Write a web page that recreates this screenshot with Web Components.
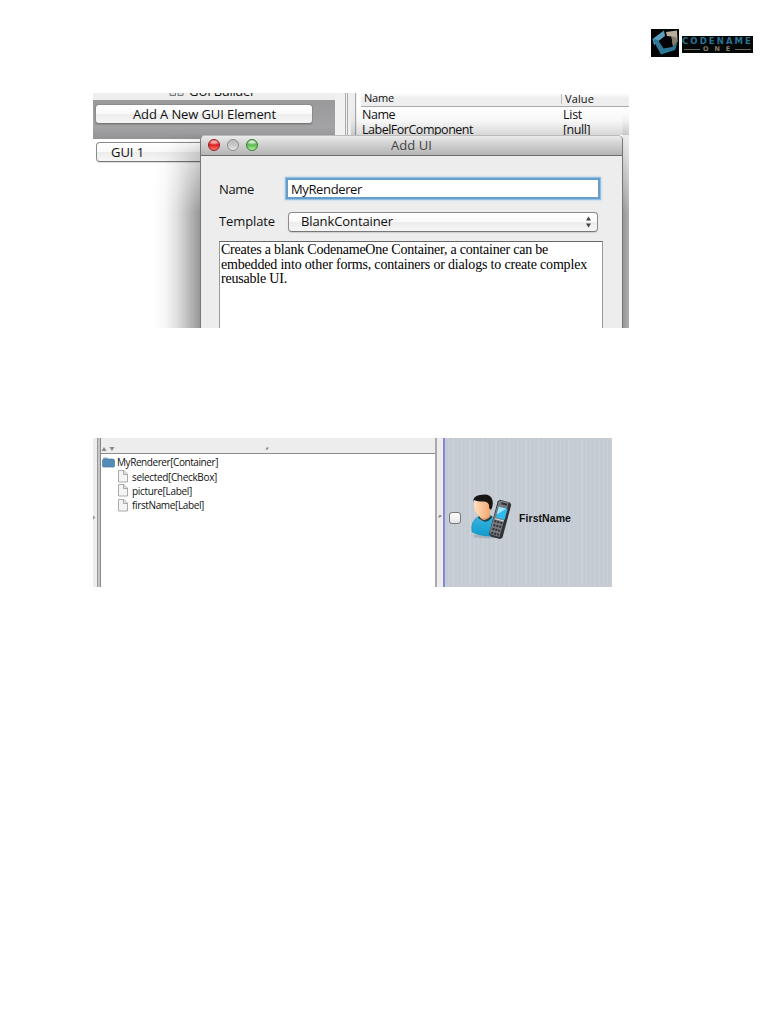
<!DOCTYPE html>
<html lang="en"><head><meta charset="utf-8"><title>Codename One</title>
<style>html,body{margin:0;background:#fff}body{width:781px;height:1011px;overflow:hidden;font-family:"Open Sans","Noto Sans",sans-serif;color:#111}</style>
</head><body>
<doc-page></doc-page>
<script>
const define=(name,html,after)=>customElements.define(name,class extends HTMLElement{
  constructor(){super();this.attachShadow({mode:'open'}).innerHTML=html}
  connectedCallback(){if(after)after.call(this)}
});

/* One line of text whose tracking is spread to a given width */
define('fit-text','<style>:host{display:block;white-space:pre;flex:none}span{display:inline-block;vertical-align:top}</style><span><slot></slot></span>',function(){
  const s=this.shadowRoot.querySelector('span'),w=+this.getAttribute('w');
  const n=this.textContent.length;
  const real=s.getBoundingClientRect().width;
  if(real)s.style.letterSpacing=((w-real)/n)+'px';
});

define('brand-logo',`<style>:host{display:flex;align-items:flex-start;width:102px;height:28px}
.word{width:71px;height:17px;background:#030708;margin:7px 0 0 3px;overflow:hidden}
.a{font:bold 8.5px/10px "DejaVu Sans",sans-serif;height:10px;color:#2b7191;padding-left:0}
.b{display:flex;align-items:center;gap:3px;font:bold 6.5px/7px "DejaVu Sans",sans-serif;height:7px;color:#857d6b;padding:0 2px}
i{height:1px;background:#6e685c;flex:1}</style>
<svg width="28" height="28" viewBox="0 0 28 28"><rect width="28" height="28" fill="#020405"/>
<path d="M13 1.500L1.500 10 3 16 7.500 12 14 7z" fill="#5b9dbd"/><path d="M1.500 10L10 25.500 24 21 26.500 13.500 21 18 12.500 19.500 7 11z" fill="#2f7799"/>
<path d="M15 3L26 1.500 26.500 12.500 22 17 20.500 7.500 16 7z" fill="#b9b09c"/><path d="M20.500 7.500L22 17 26.500 12.500 25 8z" fill="#857d6e"/></svg>
<div class="word"><fit-text class="a" w="71">CODENAME</fit-text><div class="b"><i></i><fit-text w="29">O N E</fit-text><i></i></div></div>`);

define('mac-button',`<style>:host{display:flex;box-sizing:border-box;align-items:center;border:1px solid #8b8b8b;border-bottom-color:#777;border-radius:4px;background:linear-gradient(#fff,#fafafa 48%,#ececec 52%,#f6f6f6);height:20px;font-size:13px;line-height:18px;box-shadow:0 1px 1px #0002}</style><slot></slot>`);

define('gui-list',`<style>:host{display:block;width:242px;height:235px}
.head{height:7px;background:#eee;overflow:hidden;display:flex;padding-left:76px}
.head svg{flex:none}.head fit-text{font-size:13px;line-height:18px;margin:-11px 0 0 5px}
.bar{height:35px;padding:4px 2px 0;background:linear-gradient(#99999c,#a3a3a6 70%,#949497)}
.bar mac-button{width:218px;padding-left:37px}
.item{margin:3px 0 0 3px;width:230px;padding-left:14px}.item fit-text{margin-top:-1px}</style>
<div class="head"><svg width="15" height="7"><path d="M1 0v2.5h5.5V0M9 0v2.5h5V0" fill="#ddd" stroke="#777"/></svg><fit-text w="66">GUI Builder</fit-text></div>
<div class="bar"><mac-button><fit-text w="143">Add A New GUI Element</fit-text></mac-button></div>
<mac-button class="item"><fit-text w="33">GUI 1</fit-text></mac-button>`);

define('prop-table',`<style>:host{display:block;flex:1;background:#fff;height:235px;font-size:12.5px;margin-left:4px}
.r{display:grid;grid-template-columns:201px 1fr;line-height:15px;height:15px;padding-left:1px}
.h{height:13px;line-height:12px;font-size:11px;background:linear-gradient(#fff,#eee 40%,#eee);border-bottom:1px solid #aaa;padding-left:3px;grid-template-columns:197px 1fr}
.h fit-text{margin-top:-1px}.h div{border-left:1px solid #bbb;padding-left:3px;height:10px;line-height:11px;margin-top:1px}</style>
<div class="r h"><fit-text w="30">Name</fit-text><div><fit-text w="29">Value</fit-text></div></div>
<div class="r first"><fit-text w="33">Name</fit-text><fit-text w="19">List</fit-text></div>
<div class="r"><fit-text w="111">LabelForComponent</fit-text><fit-text w="27">[null]</fit-text></div>`);

define('traffic-lights',`<style>:host{display:flex;gap:7px}i{width:12px;height:12px;box-sizing:border-box;border-radius:50%;border:1px solid #777}
.r{background:radial-gradient(ellipse 7px 3px at 50% 20%,#fbb 0,#f99 40%,#0000 100%),linear-gradient(#c22,#dc2020 50%,#ff7a70);border-color:#951b20}
.n{background:linear-gradient(#bbb,#c8c8c8 50%,#e8e8e8);border-color:#8b8b8b}
.g{background:radial-gradient(ellipse 7px 3px at 50% 20%,#dfd 0,#bdb 40%,#0000 100%),linear-gradient(#4a9a42,#5cb852 50%,#b0f59c);border-color:#357b31}</style><i class="r"></i><i class="n"></i><i class="g"></i>`);

define('add-dialog',`<style>:host{display:block;box-sizing:border-box;width:423px;height:193px;overflow:hidden;background:#ededed;border:1px solid #777;border-top-color:#bbb;border-bottom:0;border-radius:5px 5px 0 0}
header{display:flex;box-sizing:border-box;align-items:center;height:20px;border-bottom:1px solid #6e6e6e;border-radius:4px 4px 0 0;background:linear-gradient(#ececec,#d8d8d8 30%,#b4b4b4);padding-left:7px;color:#444;font-size:13px;line-height:18px}
header fit-text{margin:-1px 0 0 133px}header traffic-lights{margin-top:-1px}
.row{display:flex;align-items:center;height:25px;font-size:13px;line-height:18px;padding-left:18px}
.name{margin-top:20px}.tpl{margin-top:8px}
.field{box-sizing:border-box;width:314px;height:21px;border:2px solid #659dcb;background:#fff;box-shadow:0 0 0 1px #94bfe2,0 0 2px 1px #9bc7ec;display:flex;align-items:center;padding-left:3px;margin-left:32px}
.tpl mac-button{width:310px;margin-left:13px;padding:0 5px 0 12px;justify-content:space-between;height:20px}.tpl fit-text{margin-top:-1px}
.area{margin:7px 0 0 18px;width:381px;border:1px solid #999;border-top-color:#666;border-bottom:0;background:#fff;padding:1px 0 0 1px;height:90px;font:14px/14.5px "Liberation Serif",serif;color:#000}
</style><header><traffic-lights></traffic-lights><fit-text w="41">Add UI</fit-text></header>
<div class="row name"><fit-text w="35">Name</fit-text><div class="field"><fit-text w="71">MyRenderer</fit-text></div></div>
<div class="row tpl"><fit-text w="56">Template</fit-text><mac-button><fit-text w="92">BlankContainer</fit-text><svg width="7" height="12"><path d="M1 4.5L3.5 .5 6 4.5zM1 7.5L3.5 11.5 6 7.5z" fill="#444"/></svg></mac-button></div>
<div class="area"><fit-text w="327">Creates a blank CodenameOne Container, a container can be</fit-text><fit-text w="366">embedded into other forms, containers or dialogs to create complex</fit-text><fit-text w="66">reusable UI.</fit-text></div>`);

define('builder-shot',`<style>:host{display:flex;position:relative;overflow:hidden;width:536px;height:235px}
.split{flex:none;width:22px;background:linear-gradient(90deg,#f1f1f1 0 10px,#aaa 10px 11px,#f1f1f1 11px 12px,#aaa 12px 13px,#eee 13px 20px,#aaa 20px 21px,#eee 21px)}
.shade{position:absolute;inset:0}
.left{background:linear-gradient(90deg,transparent 60px,#00000008 72px,#00000020 84px,#00000048 97px,#00000068 107px,transparent 107px);-webkit-mask:linear-gradient(transparent 40px,#0007 65px,#000 120px)}
.right{background:linear-gradient(90deg,transparent 529px,#00000068 530px,#00000050);-webkit-mask:linear-gradient(transparent 20px,#0003 42px,#000 120px)}
.top{background:linear-gradient(transparent 14px,#00000008 28px,#00000028 42px,transparent 42px);left:258px}
add-dialog{position:absolute;left:107px;top:42px}</style>
<gui-list></gui-list><div class="split"></div><prop-table></prop-table><div class="shade left"></div><div class="shade right"></div><div class="shade top"></div><add-dialog></add-dialog>`);

define('tree-row',`<style>:host{display:flex;align-items:center;height:14.4px;font-size:10px;line-height:14px;color:#111}
.i{display:flex;width:15px;flex:none}:host([leaf]){padding-left:16px}:host([leaf]) .i{width:14px}.p{display:none}:host([leaf]) .p{display:block}:host([leaf]) .f{display:none}</style>
<span class="i"><svg class="f" width="13" height="12"><path d="M1 2.5Q1 1.5 2 1.5H5L6 2.5H11Q12 2.5 12 4V10.5H1z" fill="#78aacd"/><rect x=".5" y="3.5" width="12" height="7.5" rx="1" fill="#538db7" stroke="#47799d" stroke-width=".7"/></svg>
<svg class="p" width="11" height="13"><path d="M.5.5H6L9.5 4V12H.5z" fill="#f4f4f4" stroke="#aaa"/><path d="M5.500.5V4.500H9.5" fill="#ddd" stroke="#999" stroke-width=".8"/></svg></span><slot></slot>`);

define('component-tree',`<style>:host{display:flex;width:344px;height:149px}
.rail{width:7px;flex:none;box-sizing:border-box;background:linear-gradient(90deg,#ededed 4px,#999 4px 5px,#c6c6c6 5px);display:flex;align-items:center}
.rail svg{margin-top:9px}
main{flex:1;border-left:1px solid #888;border-right:2px solid #aaa;box-sizing:border-box}
.top{height:15px;background:#ededed;border-bottom:1px solid #8c8c8c;display:flex;align-items:flex-end}
.list{padding:1px 0 0 1px}</style>
<div class="rail"><svg width="3" height="5"><path d="M0 .5L2.500 2.5 0 4.500z" fill="#999"/></svg></div><main><div class="top"><svg width="180" height="8"><path d="M.5 6L3 2 5.5 6zM8.500 2H13.500L11 6z" fill="#888"/><path d="M164.5 5.5L165.5 2.500 168 2.500 167 4z" fill="#888"/></svg></div>
<div class="list"><tree-row><fit-text w="101">MyRenderer[Container]</fit-text></tree-row><tree-row leaf><fit-text w="85">selected[CheckBox]</fit-text></tree-row><tree-row leaf><fit-text w="60">picture[Label]</fit-text></tree-row><tree-row leaf><fit-text w="72">firstName[Label]</fit-text></tree-row></div></main>`);

define('contact-icon',`<style>:host{display:block;width:42px;height:46px}</style><svg width="42" height="46" viewBox="0 0 42 46">
<defs><linearGradient id="s" x2="1"><stop stop-color="#ffe0be"/><stop offset="1" stop-color="#f5a46c"/></linearGradient><linearGradient id="b" y2="1" x2="0"><stop stop-color="#39b7df"/><stop offset="1" stop-color="#139bd0"/></linearGradient></defs>
<ellipse cx="18" cy="42" rx="15" ry="2.500" fill="#697985" opacity=".3"/>
<path d="M2 38Q0 26 10 22L20 21 27 27 26 42Q11 43 2 38z" fill="url(#b)" stroke="#188bb2" stroke-width=".5"/>
<path d="M10 21V26Q15 29 20 23V18z" fill="#efa06e"/><path d="M9 22Q14 30 21 21.500L22.500 23Q16 32 8 23.500z" fill="#234653"/>
<path d="M4 10Q4 4 12 4T21 10Q21 19 17 23 12 26 7 20 4 16 4 10z" fill="url(#s)"/>
<path d="M3 8Q3 2 10 1 20-1 22 5 24 10 21 16L19 14Q20 8 14 7.500 8 8 4 6z" fill="#181515"/>
<g transform="translate(27 6) rotate(15)"><path d="M3-1H13L15 1V35L13 37H4L1 35V1z" fill="#303236"/><path d="M2 1L4-.5H12V35H3L1 33z" fill="#777b80"/><rect x="3.500" y="6" width="9" height="11" fill="#31b9eb"/><path d="M3.500 6H11L3.500 14z" fill="#a3e6fc"/><rect x="5" y="1" width="6" height="2" fill="#333"/>
<path d="M3 21H12M3 25H12M3 29H12M3 33H11" stroke="#303236" stroke-width="2" stroke-dasharray="2 1"/><path d="M3 18.500H12" stroke="#ddd"/></g></svg>`);

define('preview-pane',`<style>:host{display:flex;width:175px;height:149px}
.rail{width:6px;flex:none;background:#ededed;border-right:2px solid #8785dc;display:flex;align-items:center}.rail svg{margin-top:8px}
.stage{flex:1;display:flex;align-items:center;box-sizing:border-box;padding:9px 0 0 4px;background:repeating-linear-gradient(90deg,#c4cbd3 0 3px,#cad0d7 3px 4.3px)}
.c{width:12px;height:12px;box-sizing:border-box;border:1px solid #777;border-radius:3px;background:linear-gradient(#fff,#e5e5e5);margin-top:1px}
contact-icon{margin:0 0 0 9px}fit-text{font:bold 10.5px/14px "Liberation Sans",Arial,sans-serif;margin:1px 0 0 7px}</style>
<div class="rail"><svg width="5" height="5"><path d="M1 4L2 1H5L4 3z" fill="#999"/></svg></div><div class="stage"><div class="c"></div><contact-icon></contact-icon><fit-text w="52">FirstName</fit-text></div>`);

define('doc-page',`<style>:host{display:flex;flex-direction:column;align-items:flex-start;width:781px;height:1011px;background:#fff;box-sizing:border-box;padding:29px 0 0 93px}
brand-logo{margin-left:558px}builder-shot{margin-top:36px}.preview{display:flex;margin-top:110px}</style>
<brand-logo></brand-logo><builder-shot></builder-shot><div class="preview"><component-tree></component-tree><preview-pane></preview-pane></div>`);
</script></body></html>
